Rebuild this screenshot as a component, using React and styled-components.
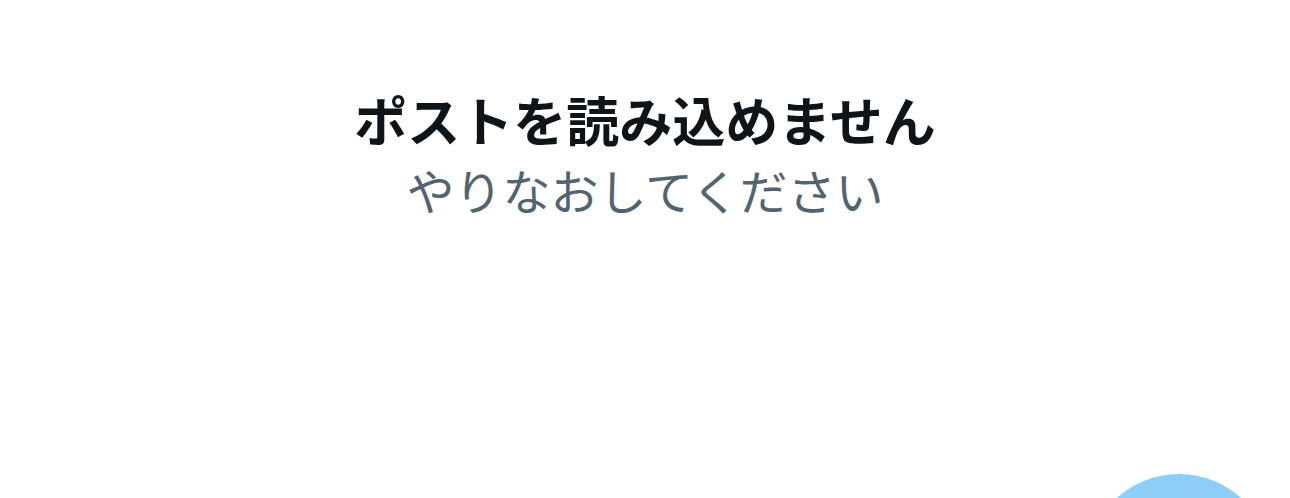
import React from 'react';
import styled, { createGlobalStyle } from 'styled-components';

const GlobalStyle = createGlobalStyle`
  html, body {
    margin: 0;
    padding: 0;
    background: #ffffff;
  }
  body {
    font-family: "Noto Sans CJK JP", "Noto Sans", sans-serif;
    overflow: hidden;
  }
`;

const Page = styled.div`
  position: relative;
  width: 1290px;
  height: 498px;
  overflow: hidden;
`;

const Message = styled.div`
  display: flex;
  flex-direction: column;
  align-items: center;
  padding-top: 88px;
`;

const Title = styled.h1`
  margin: 0;
  font-size: 53px;
  font-weight: 700;
  line-height: 62px;
  color: #0f1419;
`;

const Subtitle = styled.p`
  margin: 0;
  font-size: 48px;
  font-weight: 400;
  line-height: 78px;
  color: #536471;
`;

// 右下のフローティングボタン（画面外に半分隠れている）
const FloatingButton = styled.div`
  position: absolute;
  left: ${(p) => p.x}px;
  top: 474px;
  width: ${(p) => p.size}px;
  height: ${(p) => p.size}px;
  border-radius: 50%;
  background: #8ecdf8;
`;

function App() {
  return (
    <>
      <GlobalStyle />
      <Page>
        <Message>
          <Title>ポストを読み込めません</Title>
          <Subtitle>やりなおしてください</Subtitle>
        </Message>
        <FloatingButton x={1087} size={184} />
      </Page>
    </>
  );
}

export default App;
